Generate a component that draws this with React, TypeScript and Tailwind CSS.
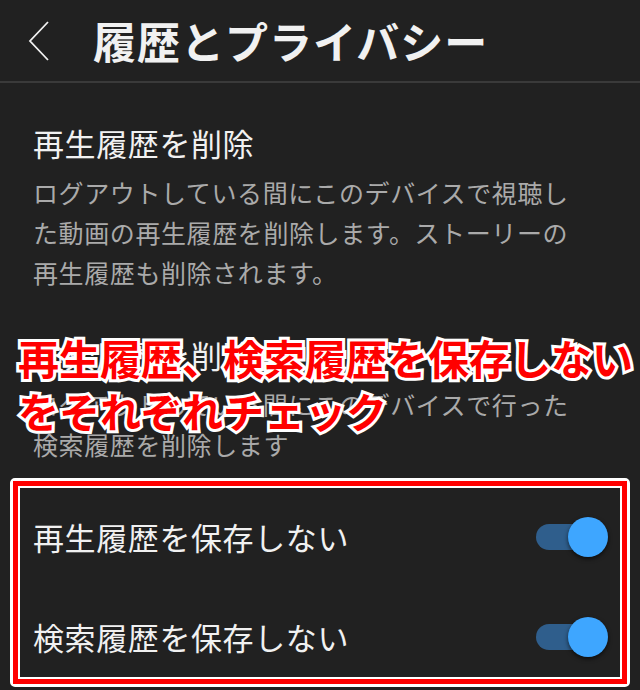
import React from "react";

const descOne = [
  "ログアウトしている間にこのデバイスで視聴し",
  "た動画の再生履歴を削除します。ストーリーの",
  "再生履歴も削除されます。",
];

const descTwo = ["ログアウトしている間にこのデバイスで行った", "検索履歴を削除します"];

function Toggle() {
  return (
    <div className="relative h-[40px] w-[72px] shrink-0">
      <div className="absolute left-0 top-[7px] h-[26px] w-[54px] rounded-full bg-[#2f5e8c]" />
      <div className="absolute right-0 top-0 h-[40px] w-[40px] rounded-full bg-[#3ea6ff] shadow-[0_2px_4px_rgba(0,0,0,0.6)]" />
    </div>
  );
}

function Section({ title, lines }: { title: string; lines: string[] }) {
  return (
    <div className="flex flex-col gap-[7px] pl-[33px]">
      <div className="h-[44px] text-[31px] leading-[44px] tracking-[0.6px] text-[#f1f1f1]">{title}</div>
      <div className="flex flex-col text-[25px] leading-[40px] tracking-[0.6px] text-[#aaaaaa]">
        {lines.map((line) => (
          <div key={line} className="whitespace-nowrap">
            {line}
          </div>
        ))}
      </div>
    </div>
  );
}

export default function App() {
  return (
    <div className="relative h-[690px] w-[640px] overflow-hidden bg-[#212121] font-['Noto_Sans_CJK_JP',sans-serif]">
      {/* header */}
      <div className="flex h-[81px] items-center">
        <svg width="24" height="42" viewBox="0 0 24 42" className="ml-[27px] shrink-0">
          <polyline points="21,2 3,21 21,40" fill="none" stroke="#f1f1f1" strokeWidth="1.8" />
        </svg>
        <div className="ml-[42px] whitespace-nowrap text-[43px] font-bold leading-none tracking-[1px] text-[#f1f1f1]">
          履歴とプライバシー
        </div>
      </div>
      <div className="h-[2px] bg-[#3a3a3a]" />

      <div className="flex flex-col pt-[38px]">
        <Section title="再生履歴を削除" lines={descOne} />
        <div className="h-[41px]" />
        <Section title="検索履歴を削除" lines={descTwo} />
      </div>

      {/* highlighted toggles */}
      <div className="mx-[10px] mt-[14px] rounded-[5px] border-[3px] border-white">
        <div className="border-[5px] border-[#ff0000]">
          <div className="flex flex-col border-[2px] border-white pl-[13px] pr-[12px]">
            <div className="flex h-[98px] items-center justify-between">
              <span className="text-[31px] leading-[40px] tracking-[0.6px] text-[#f1f1f1]">再生履歴を保存しない</span>
              <Toggle />
            </div>
            <div className="flex h-[91px] items-center justify-between pt-[11px]">
              <span className="text-[31px] leading-[40px] tracking-[0.6px] text-[#f1f1f1]">検索履歴を保存しない</span>
              <Toggle />
            </div>
          </div>
        </div>
      </div>

      {/* annotation */}
      <div className="absolute left-[18px] top-[331px] whitespace-nowrap text-[41px] font-bold leading-[53px] text-[#ff0000] [-webkit-text-stroke:6px_#ffffff] [paint-order:stroke_fill]">
        <div>再生履歴、検索履歴を保存しない</div>
        <div>をそれぞれチェック</div>
      </div>
    </div>
  );
}
